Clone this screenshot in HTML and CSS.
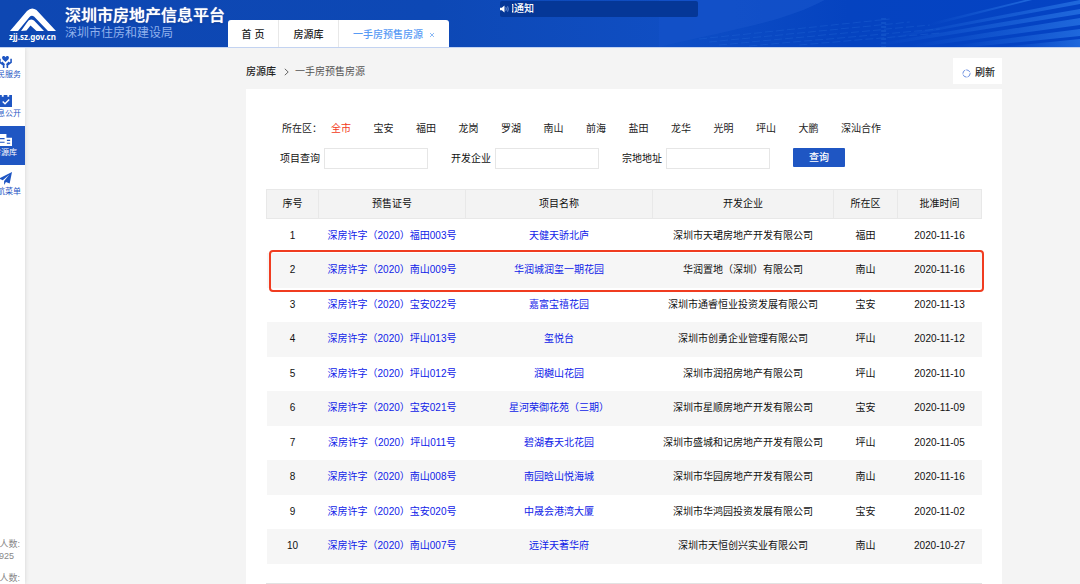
FILE: index.html
```html
<!DOCTYPE html>
<html lang="zh-CN">
<head>
<meta charset="utf-8">
<meta name="viewport" content="width=device-width, initial-scale=1">
<title>深圳市房地产信息平台</title>
<link rel="stylesheet" href="styles.css">
</head>
<body>
<header class="topbar">
  <svg class="rays" viewBox="0 0 420 47" preserveAspectRatio="none" aria-hidden="true">
    <defs>
      <linearGradient id="deep" x1="0" x2="1" y1="0" y2="0">
        <stop offset="0" stop-color="#0f4fc6"/><stop offset="0.45" stop-color="#0543c0"/><stop offset="1" stop-color="#0443c4"/>
      </linearGradient>
      <linearGradient id="beam" x1="0" x2="1" y1="0" y2="0">
        <stop offset="0" stop-color="#1c62d6" stop-opacity="0"/><stop offset="1" stop-color="#1f68dc"/>
      </linearGradient>
    </defs>
    <path d="M0 47C70 30 125 22 165 0H420V47Z" fill="url(#deep)"/>
    <path d="M0 47C70 30 125 22 165 0H0Z" fill="#1452c9" opacity=".6"/>
    <g fill="url(#beam)">
      <path d="M270 23L365 0H372L270 26Z"/>
      <path d="M225 38L420 0V4L225 40Z"/>
      <path d="M215 44L420 9V14L220 46Z"/>
      <path d="M250 45L420 18V25L258 47Z"/>
      <path d="M290 46L420 29V36L310 47Z"/>
      <path d="M340 47L420 39V47Z"/>
    </g>
    <g stroke="#1e62d3" stroke-width="1" opacity=".45" fill="none">
      <path stroke-dasharray="8 3" d="M40 39L230 19M50 42L250 22M60 45L270 25M90 46L280 29M140 45L280 33"/>
      <path stroke-dasharray="2 2" stroke-width="5" d="M224 18V47"/>
    </g>
  </svg>
  <a class="brand" href="#">
    <svg class="logo" viewBox="0 0 48 36" role="img" aria-label="zjj.sz.gov.cn">
      <path d="M1 25L18 5Q22.500 .5 27.500 4L47 25H39L25 10.500Q22.500 9 20.500 11L9 25Z" fill="#fff"/>
      <path d="M18 16.500Q20.500 12 25 14.500L35 25H27.500L21.500 19.500L17.500 24.500L12 25Z" fill="#fff"/>
      <text x="23.500" y="34" text-anchor="middle" class="logo-text">zjj.sz.gov.cn</text>
    </svg>
    <span class="brand-names">
      <strong class="brand-title">深圳市房地产信息平台</strong>
      <span class="brand-sub">深圳市住房和建设局</span>
    </span>
  </a>
  <nav class="tabs">
    <a class="tab tab-home" href="#">首 页</a>
    <a class="tab tab-lib" href="#">房源库</a>
    <a class="tab tab-active" href="#">一手房预售房源<svg class="close" viewBox="0 0 6 6" aria-hidden="true"><path d="M1 1L5 5M5 1L1 5"/></svg></a>
  </nav>
  <div class="notice">
    <svg class="speaker" viewBox="0 0 10 10" aria-hidden="true"><path d="M0 3.500H2L5 1V9L2 6.500H0Z" fill="#fff"/><path d="M6.500 3Q7.500 5 6.500 7M8.500 2Q9.800 5 8.500 8" fill="none" stroke="#9bb9ee" stroke-width=".8"/></svg>
    <span class="notice-text"><span>通知通知</span></span>
  </div>
</header>

<div class="shell">
  <aside class="sidebar">
    <nav class="side-nav">
      <a class="side-item" href="#">
        <svg class="side-icon" viewBox="0 0 14 14" aria-hidden="true"><path d="M7 7.500L3.800 4.500Q2.500 2 4.500 1.200Q6.200 .8 7 2.300Q7.800 .8 9.500 1.200Q11.500 2 10.200 4.500Z" fill="currentColor"/><path d="M1 4V8L5 11V14M13 4V8L9 11V14M3 7.500L6 10.500M11 7.500L8 10.500" fill="none" stroke="currentColor" stroke-width="1.700"/></svg>
        <span>便民服务</span>
      </a>
      <a class="side-item" href="#">
        <svg class="side-icon" viewBox="0 0 14 14" aria-hidden="true"><path d="M0 1H3V3H5V1H9V3H11V1H14V14H0Z" fill="currentColor"/><path d="M4 8L6.500 10.500L11 6" fill="none" stroke="#fff" stroke-width="1.500"/></svg>
        <span>信息公开</span>
      </a>
      <a class="side-item side-current" href="#">
        <svg class="side-icon" viewBox="0 0 14 14" aria-hidden="true"><path d="M0 1H8V5H14V14H0Z" fill="currentColor"/><path d="M1 6H6M1 10H6M8.500 8H12M8.500 11H12" stroke="#1f56c3" stroke-width="1.200"/></svg>
        <span>房源库</span>
      </a>
      <a class="side-item" href="#">
        <svg class="side-icon" viewBox="0 0 14 14" aria-hidden="true"><path d="M14 0L0 7L4 9L11 3L5.500 9.800V14L7.500 10.800L11.500 12.500Z" fill="currentColor"/></svg>
        <span>导航菜单</span>
      </a>
    </nav>
    <div class="stats">
      <p class="stat">在线人数:<br><span class="stat-value">925</span></p>
      <p class="stat">线上人数:</p>
    </div>
  </aside>

  <main class="content">
    <div class="crumb-bar">
      <nav class="crumbs">
        <a class="crumb-root" href="#">房源库</a>
        <svg class="chevron" viewBox="0 0 5 8" aria-hidden="true"><path d="M.8 .8L4.200 4L.8 7.200"/></svg>
        <span>一手房预售房源</span>
      </nav>
      <button class="refresh" type="button">
        <svg class="refresh-icon" viewBox="0 0 10 10" aria-hidden="true"><circle cx="5" cy="5" r="4"/></svg>
        刷新
      </button>
    </div>

    <section class="panel">
      <div class="districts">
        <span>所在区：</span>
        <ul class="district-list">
          <li><a class="selected" href="#">全市</a></li>
          <li><a href="#">宝安</a></li>
          <li><a href="#">福田</a></li>
          <li><a href="#">龙岗</a></li>
          <li><a href="#">罗湖</a></li>
          <li><a href="#">南山</a></li>
          <li><a href="#">前海</a></li>
          <li><a href="#">盐田</a></li>
          <li><a href="#">龙华</a></li>
          <li><a href="#">光明</a></li>
          <li><a href="#">坪山</a></li>
          <li><a href="#">大鹏</a></li>
          <li><a href="#">深汕合作</a></li>
        </ul>
      </div>
      <form class="search">
        <div class="field"><label for="project">项目查询</label><input id="project" type="text"></div>
        <div class="field"><label for="company">开发企业</label><input id="company" type="text"></div>
        <div class="field"><label for="address">宗地地址</label><input id="address" type="text"></div>
        <button class="submit" type="button">查询</button>
      </form>
      <table class="listing">
        <colgroup><col class="c-no"><col class="c-permit"><col class="c-name"><col class="c-company"><col class="c-area"><col class="c-date"></colgroup>
        <thead>
          <tr><th>序号</th><th>预售证号</th><th>项目名称</th><th>开发企业</th><th>所在区</th><th>批准时间</th></tr>
        </thead>
        <tbody>
          <tr><td>1</td><td><a href="#">深房许字（2020）福田003号</a></td><td><a href="#">天健天骄北庐</a></td><td>深圳市天珺房地产开发有限公司</td><td>福田</td><td>2020-11-16</td></tr>
          <tr class="marked"><td>2</td><td><a href="#">深房许字（2020）南山009号</a></td><td><a href="#">华润城润玺一期花园</a></td><td>华润置地（深圳）有限公司</td><td>南山</td><td>2020-11-16</td></tr>
          <tr><td>3</td><td><a href="#">深房许字（2020）宝安022号</a></td><td><a href="#">嘉富宝禧花园</a></td><td>深圳市通睿恒业投资发展有限公司</td><td>宝安</td><td>2020-11-13</td></tr>
          <tr><td>4</td><td><a href="#">深房许字（2020）坪山013号</a></td><td><a href="#">玺悦台</a></td><td>深圳市创勇企业管理有限公司</td><td>坪山</td><td>2020-11-12</td></tr>
          <tr><td>5</td><td><a href="#">深房许字（2020）坪山012号</a></td><td><a href="#">润樾山花园</a></td><td>深圳市润招房地产有限公司</td><td>坪山</td><td>2020-11-10</td></tr>
          <tr><td>6</td><td><a href="#">深房许字（2020）宝安021号</a></td><td><a href="#">星河荣御花苑（三期）</a></td><td>深圳市星顺房地产开发有限公司</td><td>宝安</td><td>2020-11-09</td></tr>
          <tr><td>7</td><td><a href="#">深房许字（2020）坪山011号</a></td><td><a href="#">碧湖春天北花园</a></td><td>深圳市盛城和记房地产开发有限公司</td><td>坪山</td><td>2020-11-05</td></tr>
          <tr><td>8</td><td><a href="#">深房许字（2020）南山008号</a></td><td><a href="#">南园晗山悦海城</a></td><td>深圳市华园房地产开发有限公司</td><td>南山</td><td>2020-11-16</td></tr>
          <tr><td>9</td><td><a href="#">深房许字（2020）宝安020号</a></td><td><a href="#">中晟会港湾大厦</a></td><td>深圳市华鸿园投资发展有限公司</td><td>宝安</td><td>2020-11-02</td></tr>
          <tr><td>10</td><td><a href="#">深房许字（2020）南山007号</a></td><td><a href="#">远洋天著华府</a></td><td>深圳市天恒创兴实业有限公司</td><td>南山</td><td>2020-10-27</td></tr>
        </tbody>
      </table>
      <hr class="divider">
    </section>
  </main>
</div>
</body>
</html>
```

FILE: styles.css
```css
* { box-sizing: border-box; }

body {
  margin: 0;
  min-height: 100vh;
  display: flex;
  flex-direction: column;
  background: #f4f4f4;
  color: #111;
  font: 10px/14px "Liberation Sans", "Noto Sans CJK SC", sans-serif;
}

a { color: inherit; text-decoration: none; }
button, input { font: inherit; }
svg { display: block; flex: none; }

/* Top bar */
.topbar {
  position: relative;
  display: flex;
  height: 48px;
  border-bottom: 1px solid #c3d3f1;
  background: linear-gradient(90deg, #0e47b2 0, #0d48b5 40%, #104fc5 65%, #0443c4 100%);
}
.rays { position: absolute; right: 0; top: 0; width: 39%; height: 100%; }
.brand, .tabs, .notice { position: relative; }
.brand { display: flex; width: 228px; padding: 6px 0 0 9px; gap: 8px; color: #fff; }
.logo { width: 48px; height: 36px; }
.logo-text { fill: #fff; font: bold 8px "Noto Sans", sans-serif; }
.brand-names { display: flex; flex-direction: column; white-space: nowrap; }
.brand-title { font-size: 16px; line-height: 20px; font-weight: 500; text-shadow: 0 0 1px #fff, 0 1px 2px #06338c; }
.brand-sub { font-size: 12px; line-height: 15px; color: #8fb0ec; }

.tabs {
  display: flex;
  align-self: flex-end;
  height: 27px;
  border-radius: 3px 3px 0 0;
  overflow: hidden;
  background: #fff;
  font-weight: 500;
  color: #222;
}
.tab { display: flex; align-items: center; justify-content: center; padding-top: 3px; border-right: 1px solid #e8e8e8; }
.tab-home { width: 51px; }
.tab-lib { width: 60px; }
.tab-active { width: 110px; gap: 6px; border-right: 0; color: #589bf5; }
.close { width: 6px; height: 6px; fill: none; stroke: #8dbaf5; stroke-width: 1; }

.notice {
  display: flex;
  align-items: center;
  gap: 3px;
  width: 198px;
  height: 16px;
  margin: 1px 0 0 51px;
  border-radius: 2px;
  background: #053797;
  color: #fff;
  font-weight: 500;
}
.speaker { width: 9px; height: 10px; }
.notice-text { display: flex; justify-content: flex-end; width: 22px; overflow: hidden; white-space: nowrap; }

/* Side menu, partly tucked behind the window's left edge */
.shell { display: flex; flex: 1; }
.sidebar {
  display: flex;
  flex-direction: column;
  align-items: flex-end;
  width: 25px;
  flex: none;
  overflow: hidden;
  background: #fff;
  box-shadow: 0 0 4px #d4d4d4;
}
.side-nav { width: 40px; }
.side-item {
  display: flex;
  flex-direction: column;
  align-items: center;
  height: 39px;
  padding-top: 7px;
  font-size: 8px;
  white-space: nowrap;
  color: #1f56c3;
}
.side-current { background: #1f56c3; color: #fff; }
.side-icon { width: 13px; height: 13px; }
.stats { width: 48px; margin-top: auto; color: #888; }
.stat { margin: 0 0 10px; padding-right: 5px; font-size: 9px; line-height: 12px; text-align: right; white-space: nowrap; }
.stat:last-child { margin-bottom: 0; }
.stat-value { padding-right: 6px; }

/* Content */
.content { flex: 1; min-width: 0; display: flex; flex-direction: column; padding: 10px 78px 0 221px; }
.crumb-bar { display: flex; align-items: center; justify-content: space-between; height: 26px; margin-bottom: 5px; }
.crumbs { display: flex; align-items: center; padding-top: 2px; color: #555; }
.crumb-root { font-weight: 500; color: #222; }
.chevron { width: 5px; height: 8px; margin: 0 6px 0 8px; fill: none; stroke: #666; stroke-width: 1; }
.refresh {
  display: flex;
  align-items: center;
  gap: 4px;
  height: 26px;
  padding: 4px 7px 0 9px;
  border: 0;
  background: #fff;
  font-weight: 500;
  color: #222;
}
.refresh-icon { width: 9px; height: 9px; fill: none; stroke: #5b82dd; stroke-width: 1; stroke-dasharray: 5 1; }

.panel { flex: 1; padding: 33px 20px 0; background: #fff; }
.districts { display: flex; gap: 9px; padding-left: 16px; color: #222; }
.district-list { display: flex; justify-content: space-between; width: 550px; margin: 0; padding: 0; list-style: none; white-space: nowrap; }
.selected { color: #f33a22; }

.search { display: flex; gap: 23px; margin: 12px 0 20px; padding-left: 14px; white-space: nowrap; }
.field { display: flex; align-items: center; gap: 4px; }
.field input { width: 104px; height: 21px; padding: 0 4px; border: 1px solid #e6e6e6; background: #fff; }
.submit { width: 52px; height: 19px; padding: 0; border: 0; border-radius: 1px; background: #1f56c3; color: #fff; font-weight: 500; }

.listing { width: 100%; table-layout: fixed; border-collapse: collapse; text-align: center; white-space: nowrap; }
.c-no { width: 52px; }
.c-permit { width: 147px; }
.c-name { width: 187px; }
.c-company { width: 181px; }
.c-area { width: 64px; }
.c-date { width: 84px; }
.listing th { height: 29px; padding: 0; border: 1px solid #e8e8e8; background: #f3f3f3; font-weight: 400; }
.listing td { height: 34px; padding: 0; }
.listing td a { color: #0f22e8; }
.listing tbody tr:nth-child(even) { background: #f6f6f6; }
.listing tbody tr:nth-child(even) td { height: 35px; }
.marked { position: relative; }
.marked::after {
  content: "";
  position: absolute;
  inset: -3px -2px -4px 2px;
  border: 2px solid #f03c20;
  border-radius: 4px;
}
.divider { height: 1px; margin: 19px 0 0; border: 0; background: #e2e2e2; }
```
